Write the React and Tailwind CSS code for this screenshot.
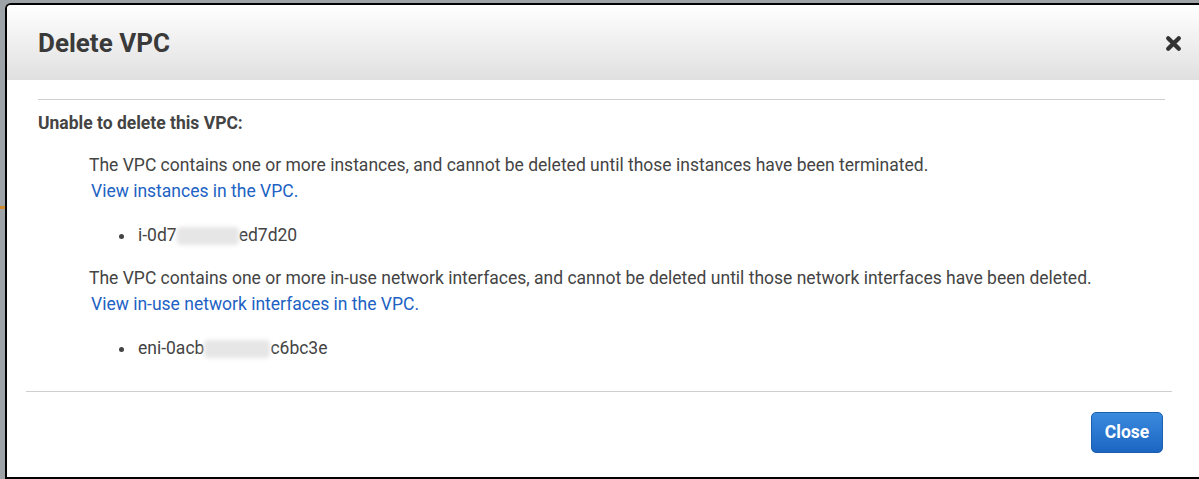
import React from 'react';

const Redacted = ({ w }) => (
  <span className={`inline-block h-[18px] align-middle bg-[#e6e6e6] blur-[2px] rounded ${w}`} />
);

const App = () => {
  return (
    <div className="relative h-[479px] w-[1199px] overflow-hidden bg-[#9ea3a8] font-['Roboto',sans-serif]">
      {/* page behind the modal */}
      <div className="absolute left-0 top-[206px] h-[3px] w-[5px] bg-[#d08a2a]" />

      <div className="ml-[5px] mt-[3px] h-[476px] border-l-2 border-t-2 border-b-2 border-black rounded-tl-[6px] bg-white flex flex-col overflow-hidden">
        {/* Header */}
        <div className="h-[75px] shrink-0 bg-gradient-to-b from-white to-[#e0e0e0] flex items-center justify-between pl-[31px] pr-[17px]">
          <h1 className="text-[26px] font-bold text-[#3a3a3a] pt-[2px]">Delete VPC</h1>
          <svg width="17" height="17" viewBox="0 0 16 16" className="mt-[1px]">
            <path d="M3 3 L13 13 M13 3 L3 13" stroke="#333" strokeWidth="4" strokeLinecap="round" />
          </svg>
        </div>

        {/* Body */}
        <div className="pl-[31px] pr-[34px] pt-[19px]">
          <div className="border-t border-[#cfcfcf]" />
          <p className="mt-[11px] text-[17.5px] font-bold text-[#444] leading-[24px]">Unable to delete this VPC:</p>

          <div className="pl-[51px] mt-[17px] text-[17.5px] text-[#444] leading-[26px]">
            <p>The VPC contains one or more instances, and cannot be deleted until those instances have been terminated.</p>
            <a className="block pl-[2px] text-[#2162c4]">View instances in the VPC.</a>
            <ul className="mt-[18px] pl-[47px] list-disc marker:text-[#444]">
              <li className="pl-[2px]">
                i-0d7<Redacted w="w-[62px]" />ed7d20
              </li>
            </ul>

            <p className="mt-[17px]">The VPC contains one or more in-use network interfaces, and cannot be deleted until those network interfaces have been deleted.</p>
            <a className="block pl-[2px] text-[#2162c4]">View in-use network interfaces in the VPC.</a>
            <ul className="mt-[18px] pl-[47px] list-disc marker:text-[#444]">
              <li className="pl-[2px]">
                eni-0acb<Redacted w="w-[66px]" />c6bc3e
              </li>
            </ul>
          </div>
        </div>

        {/* Footer */}
        <div className="mt-auto pl-[19px] pr-[27px] pb-[24px]">
          <div className="border-t border-[#cfcfcf]" />
          <div className="flex justify-end pt-[20px] pr-[9px]">
            <button className="h-[41px] w-[72px] rounded-[5px] border border-[#1c5fae] bg-gradient-to-b from-[#3a8ade] to-[#1c66c2] text-[17.5px] font-bold text-white">
              Close
            </button>
          </div>
        </div>
      </div>
    </div>
  );
};

export default App;
